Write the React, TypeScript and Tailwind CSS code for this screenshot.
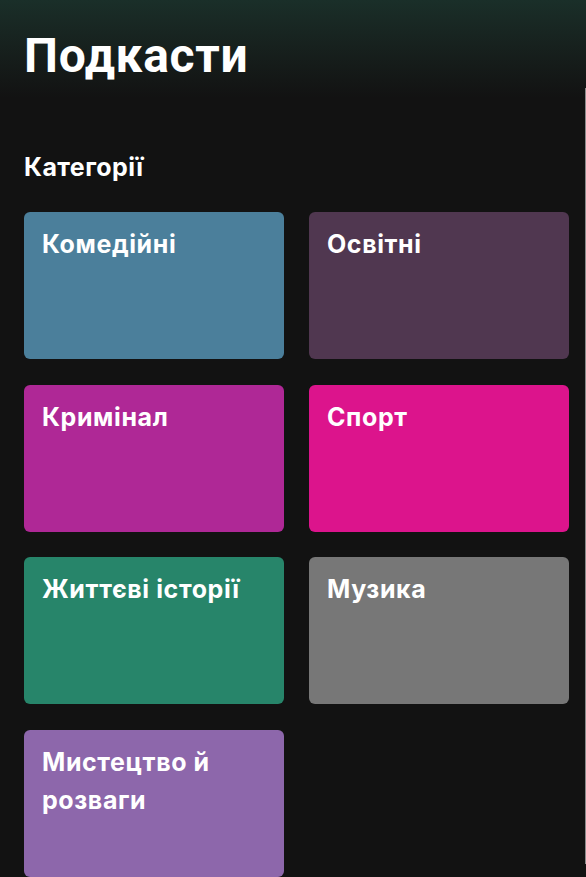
import React from "react";

type Category = { name: string; color: string };

const categories: Category[] = [
  { name: "Комедійні", color: "bg-[#4b7f9b]" },
  { name: "Освітні", color: "bg-[#503750]" },
  { name: "Кримінал", color: "bg-[#af2896]" },
  { name: "Спорт", color: "bg-[#dc148c]" },
  { name: "Життєві історії", color: "bg-[#27856a]" },
  { name: "Музика", color: "bg-[#777777]" },
  { name: "Мистецтво й розваги", color: "bg-[#8d67ab]" },
];

export default function App() {
  return (
    <div
      className="relative min-h-[877px] w-[586px] overflow-hidden bg-[#121212] text-white"
      style={{ fontFamily: "Inter, 'Noto Sans', sans-serif" }}
    >
      <header className="bg-gradient-to-b from-[#1a2f29] to-[#121212] pl-6 pt-[28px] pb-[14px]">
        <h1
          className="text-[48px] font-bold leading-[56px] tracking-[0.7px]"
          style={{ fontFamily: "Roboto, 'Noto Sans', sans-serif" }}
        >
          Подкасти
        </h1>
      </header>
      <main className="pl-6 pr-[17px] pt-[53px]">
        <h2 className="text-[25px] font-bold leading-[32px] tracking-[0.4px]">Категорії</h2>
        <div className="mt-[29px] grid grid-cols-[260px_260px] gap-x-[25px] gap-y-[25.5px]">
          {categories.map((c) => (
            <div
              key={c.name}
              className={`h-[147px] rounded-[6px] px-[18px] pt-[13px] ${c.color}`}
            >
              <div className="text-[25px] font-bold leading-[38px] tracking-[0.6px]">{c.name}</div>
            </div>
          ))}
        </div>
      </main>
      {/* thin scroll indicator along the right edge */}
      <div className="absolute right-0 top-[88px] h-[776px] w-[1px] bg-[#8a8a8a]" />
    </div>
  );
}
